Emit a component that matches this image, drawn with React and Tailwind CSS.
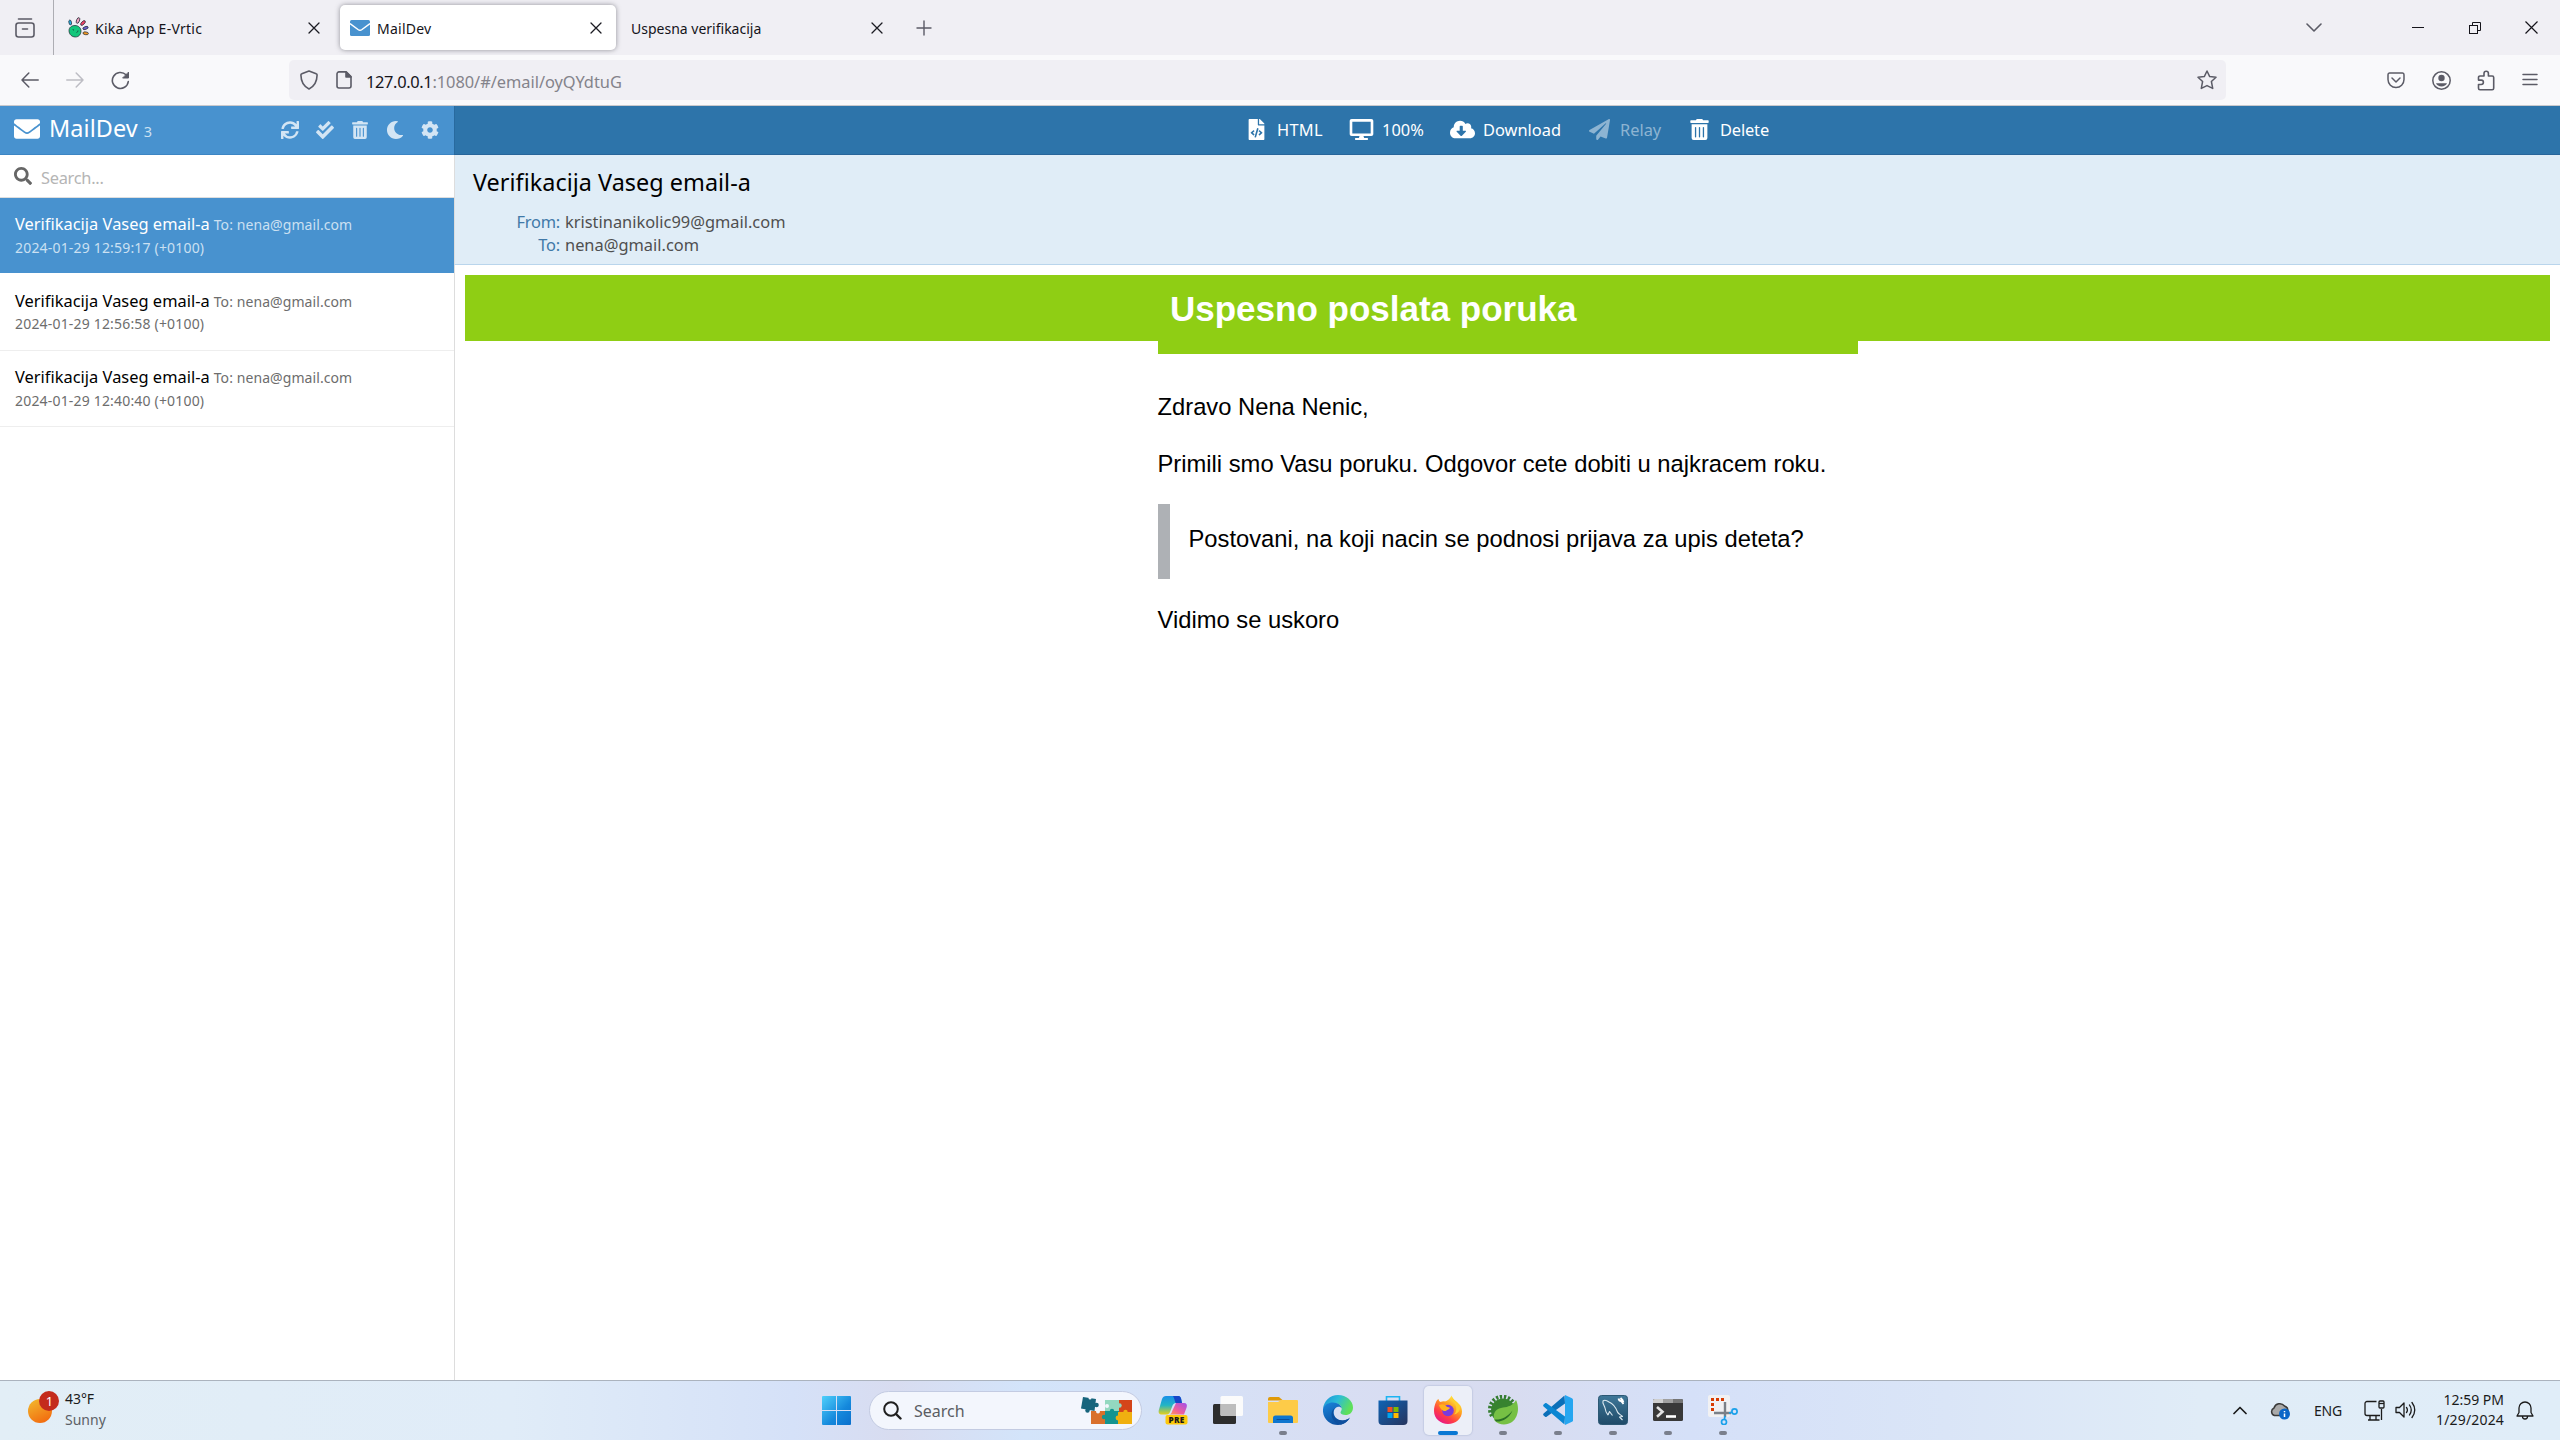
import React from "react";
import {
  FaEnvelope, FaSync, FaCheckDouble, FaTrashAlt, FaMoon, FaCog, FaSearch,
  FaFileCode, FaDesktop, FaCloudDownloadAlt, FaPaperPlane,
} from "react-icons/fa";

/* ---------- browser chrome ---------- */

const CloseX = () => (
  <svg width="12" height="12" viewBox="0 0 12 12" fill="none" stroke="#1b1b22" strokeWidth="1.3" strokeLinecap="round">
    <path d="M1 1l10 10M11 1L1 11" />
  </svg>
);

const HandIcon = () => (
  <svg width="21" height="21" viewBox="0 0 21 21" stroke="#1d2733" strokeWidth="0.7">
    <path d="M1 13.500c0-3 2.500-5 6-5s6 2.500 6 5.500-2 6-5.500 6S1 17.500 1 13.500z" fill="#12c77b" />
    <path d="M5 12l.5 1.500M8.500 15.500c1-.3 1.500-1 1.500-2" fill="none" />
    <ellipse cx="2.200" cy="5.500" rx="1.300" ry="2.500" fill="#27b3e8" transform="rotate(-12 2.200 5.500)" />
    <ellipse cx="10" cy="3.500" rx="1.500" ry="3" fill="#f4a3c0" transform="rotate(22 10 3.500)" />
    <ellipse cx="15" cy="6" rx="1.500" ry="3" fill="#ef4466" transform="rotate(45 15 6)" />
    <ellipse cx="17.500" cy="11" rx="2.800" ry="1.400" fill="#6b5fd0" transform="rotate(-20 17.500 11)" />
    <ellipse cx="17.700" cy="16.300" rx="2.800" ry="1.400" fill="#f59a23" transform="rotate(8 17.700 16.300)" />
  </svg>
);

function TabStrip() {
  return (
    <div className="flex h-[55px] items-center bg-[#f0eff4] text-[14px] text-[#15141a]">
      <div className="flex h-full w-[54px] items-center border-r border-[#adadb3] pl-[15px]">
        <svg width="20" height="20" viewBox="0 0 20 20" fill="none" stroke="#5b5b66" strokeWidth="1.600" strokeLinecap="round">
          <path d="M3.500 1h13" />
          <rect x="1" y="5" width="18" height="14" rx="2.500" />
          <path d="M7.500 11h5" />
        </svg>
      </div>
      <div className="flex h-[45px] w-[286px] items-center pl-[14px] pr-[20px]">
        <HandIcon />
        <span className="ml-[6px] flex-1 pt-[2px] tracking-[0.28px]">Kika App E-Vrtic</span>
        <CloseX />
      </div>
      <div className="flex h-[45px] w-[276px] items-center rounded-[5px] bg-white pl-[10px] pr-[14px] shadow-[0_0_5px_rgba(80,80,90,0.6)]">
        <svg width="20" height="16" viewBox="0 0 20 16">
          <rect width="20" height="16" rx="1.500" fill="#4892cf" />
          <path d="M0 3.500l8 6q2 1.400 4 0l8-6" fill="none" stroke="#fff" strokeWidth="1.500" />
        </svg>
        <span className="ml-[7px] flex-1 pt-[2px] tracking-[0.25px]">MailDev</span>
        <CloseX />
      </div>
      <div className="flex h-[45px] w-[281px] items-center pl-[15px] pr-[14px]">
        <span className="flex-1 pt-[2px]">Uspesna verifikacija</span>
        <CloseX />
      </div>
      <svg className="ml-[19px]" width="16" height="16" viewBox="0 0 16 16" fill="none" stroke="#5b5b66" strokeWidth="1.400" strokeLinecap="round">
        <path d="M8 1v14M1 8h14" />
      </svg>
      <div className="flex-1" />
      <svg className="mr-[90px]" width="16" height="10" viewBox="0 0 16 10" fill="none" stroke="#5b5b66" strokeWidth="1.600" strokeLinecap="round" strokeLinejoin="round">
        <path d="M1 1l7 7 7-7" />
      </svg>
      <div className="mr-[45px] h-px w-[12px] bg-[#15141a]" />
      <svg className="mr-[44px]" width="12" height="12" viewBox="0 0 12 12" fill="none" stroke="#15141a">
        <path d="M3.500 3V.5h8v8H9" />
        <rect x=".5" y="3.500" width="8" height="8" />
      </svg>
      <svg className="mr-[22px]" width="13" height="13" viewBox="0 0 13 13" fill="none" stroke="#15141a" strokeWidth="1.200">
        <path d="M.5.5l12 12M12.500.5l-12 12" />
      </svg>
    </div>
  );
}

function NavBar() {
  return (
    <div className="flex h-[51px] items-center border-b border-[#c9c9cd] bg-[#f9f9fb] text-[#5b5b66]">
      <svg className="ml-[21px]" width="18" height="16" viewBox="0 0 18 16" fill="none" stroke="currentColor" strokeWidth="1.500" strokeLinecap="round" strokeLinejoin="round">
        <path d="M17.200 8H1M7.800 1L1 8l6.800 7" />
      </svg>
      <svg className="ml-[27px] text-[#bdbdc4]" width="18" height="16" viewBox="0 0 18 16" fill="none" stroke="currentColor" strokeWidth="1.500" strokeLinecap="round" strokeLinejoin="round">
        <path d="M.8 8H17M10.200 1L17 8l-6.800 7" />
      </svg>
      <svg className="ml-[27px]" width="19" height="19" viewBox="0 0 19 19" fill="none" stroke="currentColor" strokeWidth="1.600" strokeLinecap="round">
        <path d="M17.300 10.500A8 8 0 1 1 15 3.800l1.500 1.700" />
        <path d="M17.500 1.500v5.500h-5.500z" fill="currentColor" strokeWidth="1" strokeLinejoin="round" />
      </svg>
      <div className="ml-[159px] flex h-[40px] w-[1937px] items-center rounded-[5px] bg-[#f0eff4] text-[16.4px]">
        <svg className="ml-[11px]" width="18" height="20" viewBox="0 0 18 20" fill="none" stroke="currentColor" strokeWidth="1.600" strokeLinejoin="round">
          <path d="M9 1l7.200 2.800c.6.200.9.6.9 1.200C17 11.500 14 16.500 9 19 4 16.500 1 11.500.9 5c0-.6.300-1 .9-1.200z" />
        </svg>
        <svg className="ml-[18px]" width="16" height="18" viewBox="0 0 16 18" fill="none" stroke="currentColor" strokeWidth="1.600" strokeLinejoin="round">
          <path d="M3 .9h7.200L15 5.500V15a2 2 0 0 1-2 2H3a2 2 0 0 1-2-2V2.900a2 2 0 0 1 2-2z" />
          <path d="M10 1v5h5z" fill="currentColor" />
        </svg>
        <div className="ml-[14px] flex-1 whitespace-nowrap pt-[4px]">
          <span className="tracking-[-0.34px] text-[#15141a]">127.0.0.1</span>
          <span className="tracking-[-0.03px] text-[#84838b]">:1080/#/email/oyQYdtuG</span>
        </div>
        <svg className="mr-[9px]" width="20" height="20" viewBox="0 0 20 20" fill="none" stroke="currentColor" strokeWidth="1.500" strokeLinejoin="round">
          <path d="M10 1l2.700 5.600 6.300.7-4.600 4.200 1.300 6.900L10 15.600l-5.700 2.800 1.300-6.900L1 7.300l6.300-.7z" />
        </svg>
      </div>
      <div className="flex-1" />
      <svg className="mr-[27px]" width="18" height="17" viewBox="0 0 18 17" fill="none" stroke="currentColor" strokeWidth="1.500" strokeLinecap="round" strokeLinejoin="round">
        <path d="M2.500 1h13A1.700 1.700 0 0 1 17 2.700v4.800a8 8 0 0 1-16 0V2.700A1.700 1.700 0 0 1 2.500 1z" />
        <path d="M5 6l4 4 4-4" />
      </svg>
      <svg className="mr-[26px]" width="19" height="19" viewBox="0 0 19 19" fill="currentColor">
        <circle cx="9.500" cy="9.500" r="8.700" fill="none" stroke="currentColor" strokeWidth="1.500" />
        <circle cx="9.500" cy="7" r="3.200" />
        <path d="M4 12.300h11c-.6 2-3 3.200-5.500 3.200S4.600 14.300 4 12.300z" />
      </svg>
      <svg className="mr-[27px]" width="18" height="21" viewBox="0 0 18 21" fill="none" stroke="currentColor" strokeWidth="1.600" strokeLinejoin="round">
        <path d="M1.500 9V7.500a1.500 1.500 0 0 1 1.500-1.500h4V3.500a2.200 2.200 0 0 1 4.400 0V6h3.800a1.500 1.500 0 0 1 1.500 1.500v10.700a1.500 1.500 0 0 1-1.500 1.500H3a1.500 1.500 0 0 1-1.500-1.500V14.500h2.700a2.200 2.200 0 0 0 0-4.400H1.500z" />
      </svg>
      <svg className="mr-[22px]" width="16" height="14" viewBox="0 0 16 14" fill="none" stroke="currentColor" strokeWidth="1.500" strokeLinecap="round">
        <path d="M1 1.500h14M1 6.500h14M1 11.500h14" />
      </svg>
    </div>
  );
}

/* ---------- MailDev ---------- */

const sideActions = [FaSync, FaCheckDouble, FaTrashAlt, FaMoon, FaCog];

const mails = [
  { time: "2024-01-29 12:59:17 (+0100)", box: "h-[75px] mb-px pt-[14px] bg-[#4892cf]", gap: "mt-[2px]", title: "text-white", meta: "text-[#cbe0f2]" },
  { time: "2024-01-29 12:56:58 (+0100)", box: "h-[77px] pt-[15px] border-b border-[#eeeeee]", gap: "mt-px", title: "text-black", meta: "text-[#6d6d6d]" },
  { time: "2024-01-29 12:40:40 (+0100)", box: "h-[76px] pt-[14px] border-b border-[#eeeeee]", gap: "mt-[2px]", title: "text-black", meta: "text-[#6d6d6d]" },
];

function Sidebar() {
  return (
    <div className="flex w-[454px] flex-col bg-white">
      <div className="flex h-[49px] items-center border-b border-[#3c85c3] bg-[#4892cf] pl-[14px] pr-[7px] text-white">
        <FaEnvelope className="mb-[2px] size-[26px]" />
        <div className="mb-[3px] ml-[9px] flex flex-1 items-baseline">
          <span className="text-[23.4px] tracking-[0.1px]">MailDev</span>
          <span className="ml-[6px] text-[14.5px] text-[#cbe0f2]">3</span>
        </div>
        <div className="flex text-[#d3e5f4]">
          {sideActions.map((Icon, i) => (
            <span key={i} className="flex w-[35px] justify-center">
              <Icon className="size-[18px]" />
            </span>
          ))}
        </div>
      </div>
      <div className="flex h-[43px] items-center border-b border-[#dedede] pl-[14px]">
        <FaSearch className="size-[18px] text-[#666666]" />
        <span className="ml-[9px] pt-[4px] text-[16.4px] tracking-[-0.28px] text-[#b5b5b5]">Search...</span>
      </div>
      {mails.map((m) => (
        <div key={m.time} className={"pl-[15px] " + m.box}>
          <div className="flex h-[24px] items-baseline leading-[24px]">
            <span className={"text-[16.4px] tracking-[0.02px] " + m.title}>Verifikacija Vaseg email-a</span>
            <span className={"ml-[4px] text-[14px] tracking-[0.08px] " + m.meta}>To: nena@gmail.com</span>
          </div>
          <div className={"text-[14px] leading-[20px] tracking-[0.18px] " + m.gap + " " + m.meta}>{m.time}</div>
        </div>
      ))}
    </div>
  );
}

const actions = [
  { Icon: FaFileCode, label: "HTML", w: "w-[47px] tracking-[0.3px]", c: "text-white" },
  { Icon: FaDesktop, label: "100%", w: "w-[43px] tracking-[0.05px]", c: "text-white", wide: true },
  { Icon: FaCloudDownloadAlt, label: "Download", w: "w-[79px]", c: "text-white", wide: true },
  { Icon: FaPaperPlane, label: "Relay", w: "w-[42px]", c: "text-[#8db4d2]" },
  { Icon: FaTrashAlt, label: "Delete", w: "w-[50px] tracking-[-0.14px]", c: "text-white" },
];

function MailView() {
  return (
    <div className="flex flex-1 flex-col border-l border-[#dddddd] bg-white">
      <div className="-ml-px flex h-[49px] items-center gap-[25px] border-b border-l border-[#27659a] border-l-[#286a9f] bg-[#2d74aa] pl-[789px] text-[16.4px]">
        {actions.map(({ Icon, label, w, c, wide }) => (
          <div key={label} className={"flex items-center " + c}>
            <span className="flex w-[25px] justify-center">
              <Icon className={wide ? "h-[21px] w-[25px]" : "size-[21px]"} />
            </span>
            <span className={"ml-[8px] " + w}>{label}</span>
          </div>
        ))}
      </div>
      <div className="-ml-px h-[110px] border-b border-l border-[#b9d5ec] border-l-[#dddddd] bg-[#e0edf7] pl-[18px] pt-[10px]">
        <div className="h-[34px] text-[23.4px] leading-[34px] tracking-[0.03px] text-black">Verifikacija Vaseg email-a</div>
        <div className="mt-[11px] grid grid-cols-[87px_auto] gap-x-[5px] text-[16.4px] leading-[23px] text-[#4f4f4f]">
          <span className="text-right tracking-[-0.2px] text-[#4079a8]">From:</span>
          <span>kristinanikolic99@gmail.com</span>
          <span className="text-right tracking-[-0.2px] text-[#4079a8]">To:</span>
          <span>nena@gmail.com</span>
        </div>
      </div>
      <div className="p-[10px] font-['Liberation_Sans',Arial,sans-serif] text-[23.75px] leading-[30px] text-black">
        <div className="mx-auto h-[66px] bg-[#8fce14]">
          <div className="mx-auto h-[79px] w-[700px] bg-[#8fce14] pl-[12.5px] pt-[14px]">
            <h1 className="text-[35px] font-bold leading-[40px] text-white">Uspesno poslata poruka</h1>
          </div>
        </div>
        <div className="mx-auto mt-[51px] w-[700px]">
          <p>Zdravo Nena Nenic,</p>
          <p className="mt-[27px]">Primili smo Vasu poruku. Odgovor cete dobiti u najkracem roku.</p>
          <div className="mt-[25px] h-[75px] border-l-[12px] border-[#aeb1b5] pl-[19px] pt-[20px]">
            Postovani, na koji nacin se podnosi prijava za upis deteta?
          </div>
          <p className="mt-[26px]">Vidimo se uskoro</p>
        </div>
      </div>
    </div>
  );
}

/* ---------- taskbar ---------- */

const Puzzle = () => (
  <svg width="53" height="29" viewBox="0 0 53 29">
    <path d="M11 15h14v13H11z" fill="#d9702c" />
    <path d="M25 4h14v11H25z" fill="#93d8c0" />
    <path d="M39 4h13v12H39z" fill="#d4451a" />
    <path d="M25 15h14v13H25z" fill="#149490" />
    <path d="M38 16h14v12H38z" fill="#f0b010" />
    <circle cx="18" cy="15.500" r="2" fill="#f3f6fd" />
    <circle cx="27" cy="10" r="2" fill="#f3f6fd" />
    <circle cx="24" cy="21" r="2.200" fill="#149490" />
    <circle cx="39.500" cy="9.500" r="2.200" fill="#93d8c0" />
    <circle cx="32" cy="15" r="2.200" fill="#149490" />
    <circle cx="38" cy="22" r="2.400" fill="#f0b010" />
    <circle cx="45.500" cy="16" r="2.200" fill="#f0b010" />
    <path d="M3 1l13 2-1.500 12L1 12.500z" fill="#17647c" />
    <circle cx="16.500" cy="9" r="2.300" fill="#17647c" />
    <circle cx="7.500" cy="14.500" r="2.200" fill="#17647c" />
    <circle cx="10" cy="2" r="1.500" fill="#f3f6fd" />
  </svg>
);

const Copilot = () => (
  <svg width="30" height="30" viewBox="0 0 30 30">
    <defs>
      <linearGradient id="cpA" x1="0" y1="0" x2="0" y2="1">
        <stop offset="0" stopColor="#1a8fe8" /><stop offset=".5" stopColor="#22b5c4" /><stop offset="1" stopColor="#e8d01a" />
      </linearGradient>
      <linearGradient id="cpB" x1="1" y1="0" x2="0" y2="1">
        <stop offset="0" stopColor="#a050ec" /><stop offset=".6" stopColor="#f0609a" /><stop offset="1" stopColor="#ffa050" />
      </linearGradient>
    </defs>
    <path d="M8 1h12c3 0 3 2 4 7h-6c-2 0-3 1-4 4l-2 5c-.8 2-2 2.500-4 2.500H4c-3 0-4-2-3-5L4 4c.8-2 2-3 4-3z" fill="url(#cpA)" />
    <path d="M15 1h5c3 0 3 2 4 7h-6c-1 0-1.500-5-3-7z" fill="#1646c8" />
    <path d="M18 8h8c2.500 0 3.500 2 2.600 4.500L26 19.500H11c2 0 2.500-1.500 3.200-3.500z" fill="url(#cpB)" />
    <rect x="7.500" y="20" width="22" height="9.500" rx="2" fill="#fdc90a" />
    <text x="18.500" y="27.800" textAnchor="middle" fontSize="8.200" fontWeight="800" letterSpacing=".3" fill="#1a1a1a" fontFamily="Open Sans, sans-serif">PRE</text>
  </svg>
);

const TaskView = () => (
  <svg width="30" height="30" viewBox="0 0 30 30">
    <rect x="0" y="9" width="23" height="20" rx="1.500" fill="#2d2d2d" />
    <rect x="7.500" y="1" width="22.500" height="20" rx="1.500" fill="#fbfbfb" />
    <path d="M7.500 9H23v12H9a1.500 1.500 0 0 1-1.500-1.500z" fill="#bdbdbd" />
  </svg>
);

const Explorer = () => (
  <svg width="30" height="30" viewBox="0 0 30 30">
    <path d="M0 4a2 2 0 0 1 2-2h9l4 3.500H0z" fill="#e09a08" />
    <path d="M0 7h10l3-2h16a1 1 0 0 1 1 1v21a1 1 0 0 1-1 1H1a1 1 0 0 1-1-1z" fill="#fdcb48" />
    <path d="M5 28v-5a2.500 2.500 0 0 1 2.500-2.500h15A2.500 2.500 0 0 1 25 23v5z" fill="#0f76cf" />
    <path d="M9 24.500h12" stroke="#0a4f9c" strokeWidth="1.200" strokeLinecap="round" />
  </svg>
);

const Edge = () => (
  <svg width="30" height="30" viewBox="0 0 30 30">
    <defs>
      <linearGradient id="edA" x1="0" y1="0" x2="1" y2=".4">
        <stop offset="0" stopColor="#1a8fd8" /><stop offset=".5" stopColor="#2cbcd8" /><stop offset="1" stopColor="#5fe05a" />
      </linearGradient>
      <linearGradient id="edB" x1="0" y1="0" x2=".6" y2="1">
        <stop offset="0" stopColor="#1a86dc" /><stop offset="1" stopColor="#0c4c9c" />
      </linearGradient>
    </defs>
    <path d="M0 14C.8 6 7 0 15 0c8.500 0 15 6 15 12.500 0 5-3.500 7.500-7.500 7.500-3 0-5-1-5-2.500 0-1 1.200-1.500 1.200-3.700C18.700 10.500 15 8 11 8 5 8 1 11 0 14z" fill="url(#edA)" />
    <path d="M0 14c1-4 5-6.500 10-6.500 4.500 0 8.500 2.800 8.700 6C18 12 16.500 11.500 15 11.800c-3.500.7-5 4.200-4 7.700 1.200 4.500 6.500 7 11.500 5.500 2-.6 3.500-1.500 4.500-2.500C24.500 27 20 30 15 30 7 30-.8 23.500 0 14z" fill="url(#edB)" />
    <path d="M13 12.500c-3 1.500-3.500 5-2 8.500 2 4 7 5.500 11.500 4 2-.6 3.500-1.500 4.500-2.500-2 3.800-5 6-9 7-5-.5-9.500-5-9.500-10 0-3.500 1.800-6 4.500-7z" fill="#0d4f9e" />
  </svg>
);

const Store = () => (
  <svg width="30" height="30" viewBox="0 0 30 30">
    <defs>
      <linearGradient id="stA" x1="0" y1="0" x2="1" y2="1">
        <stop offset="0" stopColor="#0f63b4" /><stop offset="1" stopColor="#26345e" />
      </linearGradient>
    </defs>
    <path d="M8.500 6V1.700h13V6" fill="none" stroke="#1db4f2" strokeWidth="1.600" />
    <path d="M.5 5.500h29V26a4 4 0 0 1-4 4h-21a4 4 0 0 1-4-4z" fill="url(#stA)" />
    <rect x="9.500" y="12" width="5" height="5" fill="#f25022" />
    <rect x="15.500" y="12" width="5" height="5" fill="#7fba00" />
    <rect x="9.500" y="18" width="5" height="5" fill="#00a4ef" />
    <rect x="15.500" y="18" width="5" height="5" fill="#ffb900" />
  </svg>
);

const Firefox = () => (
  <svg width="30" height="30" viewBox="0 0 30 30">
    <defs>
      <linearGradient id="ffA" x1=".85" y1=".1" x2=".25" y2="1">
        <stop offset="0" stopColor="#fff04a" /><stop offset=".35" stopColor="#ffa01e" /><stop offset=".7" stopColor="#ff3c46" /><stop offset="1" stopColor="#e6148c" />
      </linearGradient>
    </defs>
    <path d="M3 7c.5-1.500 1.500-2.500 2.500-3 .2 1.500 1 2.500 2 3 1.500-.6 3-.8 4.500-.5C14.500 6 17 3.500 18.500.5c1 3.500 4.500 5.500 6.500 8 2.500 1 4 4.500 4 8C29 23.500 22.500 29 15 29S1 23.500 1 16c0-3.500.8-6.500 2-9z" fill="url(#ffA)" />
    <circle cx="15" cy="15.500" r="5.800" fill="#7a3bdc" />
    <path d="M6 10c3-1.500 6-.5 7.500 1.500 1 1.200 3 .5 3.500 1.500-1 2-3.500 1.500-4 3-3 .5-6-2-7-6z" fill="#ffb21e" />
    <path d="M19 2c-1 4 2 5 3.500 8 1.500 3 1 7-1.500 9.500 4-1 6.500-4 6-8C26 7 21 6 19 2z" fill="#ffcf2e" />
  </svg>
);

const Spring = () => (
  <svg width="30" height="30" viewBox="0 0 30 30">
    <path d="M27 14.500A12.500 12.500 0 1 0 4 21" fill="none" stroke="#357d31" strokeWidth="4" strokeDasharray="2.300 1.700" />
    <circle cx="15" cy="15.500" r="12" fill="#37832f" />
    <path d="M28 5c3.500 7 2.500 17-4 22-5 3.500-13 3.500-17.500-1.500C4 18 8 13.500 15 12.500 20 12 25 10.500 28 5z" fill="#76c044" />
    <path d="M6.500 24.500c7 .5 13.500-3 18-9-3.500 8-10 11.500-16.500 11z" fill="#2b7127" />
  </svg>
);

const VSCode = () => (
  <svg width="30" height="30" viewBox="0 0 30 30">
    <path d="M21.500.5L.6 18.500c-.6.600-.6 1.400 0 2l1.500 1.300c.5.400 1 .4 1.500 0L22 8.500z" fill="#0b6fb8" />
    <path d="M21.500 29.500L.6 11.500c-.6-.6-.6-1.400 0-2l1.500-1.300c.5-.4 1-.4 1.500 0L22 21.500z" fill="#0a86d2" />
    <path d="M22 0l7 3.200c.6.300 1 .9 1 1.600v20.400c0 .7-.4 1.300-1 1.600L22 30z" fill="#26a6f0" />
  </svg>
);

const MySQL = () => (
  <svg width="30" height="30" viewBox="0 0 30 30">
    <defs>
      <linearGradient id="msA" x1="0" y1="0" x2="0" y2="1">
        <stop offset="0" stopColor="#3f7899" /><stop offset="1" stopColor="#1f4a68" />
      </linearGradient>
    </defs>
    <rect x=".5" y=".5" width="29" height="29" rx="3" fill="url(#msA)" stroke="#2c5874" />
    <path d="M10 20c-2-2-2.500-4-3-7-.4-2-3-5-2-7 1.500-1.500 4-.5 6 1 5 2 7 6 8.500 10 .8 2 3 2.500 5 4.500l-3 .5 3 3M10 20l1.500-3.500 3 4" fill="none" stroke="#dce9f0" strokeWidth="1.100" strokeLinejoin="round" />
    <path d="M20.500 3.500c.5 2 1.500 2.500 2.500 2.500l2.500 3M22.500 3l2 2 1 2.500" fill="none" stroke="#fff" strokeWidth="1.800" />
  </svg>
);

const Terminal = () => (
  <svg width="30" height="30" viewBox="0 0 30 30">
    <rect y="4" width="30" height="22" rx="1.500" fill="#383838" />
    <path d="M1.500 4H10v4H0V5.500A1.500 1.500 0 0 1 1.500 4z" fill="#cfcfcf" />
    <path d="M10 4h10v4H10z" fill="#a0a0a0" />
    <path d="M20 4h8.500A1.500 1.500 0 0 1 30 5.500V8H20z" fill="#757575" />
    <path d="M4 12l5.500 4.800L4 21.700" fill="none" stroke="#e2e2e2" strokeWidth="2.600" />
    <path d="M13 21.500h10" stroke="#fff" strokeWidth="2.600" />
  </svg>
);

const Snip = () => (
  <svg width="30" height="30" viewBox="0 0 30 30">
    <rect x="0" y="0" width="22" height="22" rx="2" fill="#f1f1f3" />
    <path d="M3 4.500h13M4.500 3v13" fill="none" stroke="#d83b01" strokeWidth="3" strokeDasharray="3 2" />
    <path d="M17 7v15M6 18h17" stroke="#7b8087" strokeWidth="2.400" />
    <circle cx="26.500" cy="16.500" r="2.600" fill="none" stroke="#1ba1ea" strokeWidth="1.700" />
    <circle cx="16" cy="27" r="2.500" fill="none" stroke="#1ba1ea" strokeWidth="1.700" />
    <path d="M21 18l3-.8M17 21l-.6 3.500" stroke="#1ba1ea" strokeWidth="1.700" />
  </svg>
);

const apps = [
  { Icon: Copilot }, { Icon: TaskView }, { Icon: Explorer, open: true }, { Icon: Edge }, { Icon: Store },
  { Icon: Firefox, active: true }, { Icon: Spring, open: true }, { Icon: VSCode, open: true },
  { Icon: MySQL, open: true }, { Icon: Terminal, open: true }, { Icon: Snip, open: true },
];

function Taskbar() {
  return (
    <div className="flex h-[60px] items-center border-t border-[#abb3be] bg-[linear-gradient(90deg,#e2eef6_0%,#e0ecf8_20%,#d5e1f8_31%,#d8dcf0_35%,#d3e4fa_40%,#d8def3_52%,#d8dcf0_59%,#d5e0f8_66%,#dae5f7_76%,#e0ecf7_86%,#e0edf8_100%)] pb-px text-[14px] text-[#1b1b1b]">
      <div className="mb-[3px] flex w-[822px] items-center pl-[26px]">
        <svg width="34" height="36" viewBox="0 0 34 36">
          <defs>
            <linearGradient id="sun" x1=".2" y1="0" x2=".7" y2="1">
              <stop offset="0" stopColor="#f2b62c" /><stop offset="1" stopColor="#f26a0f" />
            </linearGradient>
          </defs>
          <circle cx="14" cy="20" r="12" fill="url(#sun)" />
          <circle cx="23" cy="10" r="10" fill="#c42b1c" />
          <text x="23.500" y="14.800" textAnchor="middle" fontSize="13" fill="#fff" fontFamily="Noto Sans, sans-serif">1</text>
        </svg>
        <div className="ml-[5px] leading-[21px]">
          <div className="tracking-[-0.07px]">43°F</div>
          <div className="text-[#5c6166]">Sunny</div>
        </div>
      </div>
      <svg width="29" height="29" viewBox="0 0 29 29">
        <defs>
          <linearGradient id="win" x1="0" y1="0" x2="1" y2="1">
            <stop offset="0" stopColor="#4fd0fb" /><stop offset=".6" stopColor="#1488dc" /><stop offset="1" stopColor="#0a6fcc" />
          </linearGradient>
        </defs>
        <path d="M1 0h13v14H0V1a1 1 0 0 1 1-1zM15 0h13a1 1 0 0 1 1 1v13H15zM0 15h14v14H1a1 1 0 0 1-1-1zM15 15h14v13a1 1 0 0 1-1 1H15z" fill="url(#win)" />
      </svg>
      <div className="ml-[18px] flex h-[39px] w-[273px] items-center rounded-full border border-[#c3cbe2] bg-[#f3f6fd] pl-[13px] pr-[8px] text-[16px] text-[#5b5d63]">
        <svg width="19" height="19" viewBox="0 0 19 19" fill="none" stroke="#1f1f1f" strokeWidth="2" strokeLinecap="round">
          <circle cx="8" cy="8" r="6.800" />
          <path d="M13 13l4.500 4.500" strokeWidth="2.400" />
        </svg>
        <span className="ml-[12px] flex-1 pt-px">Search</span>
        <Puzzle />
      </div>
      <div className="ml-[3px] flex">
        {apps.map(({ Icon, open, active }, i) => (
          <div key={i} className="flex w-[55px] justify-center">
            <div className={"relative flex h-[49px] w-[48px] items-center justify-center rounded-[5px] " + (active ? "bg-[#eceff8] shadow-[0_0_1px_1px_rgba(180,190,215,0.5)]" : "")}>
              <Icon />
              {open && <span className="absolute bottom-0 left-[20px] h-[4px] w-[8px] rounded-full bg-[#7a7f8c]" />}
              {active && <span className="absolute bottom-0 left-[14px] h-[4px] w-[20px] rounded-full bg-[#0a78d4]" />}
            </div>
          </div>
        ))}
      </div>
      <div className="flex-1" />
      <svg className="mr-[23px]" width="14" height="9" viewBox="0 0 14 9" fill="none" stroke="#1b1b1b" strokeWidth="1.700" strokeLinecap="round" strokeLinejoin="round">
        <path d="M1 7.500l6-6 6 6" />
      </svg>
      <svg className="mr-[24px]" width="20" height="19" viewBox="0 0 20 19">
        <path d="M4.500 14.500a4 4 0 0 1-.5-7.500A6 6 0 0 1 14.500 5a5 5 0 0 1 3.500 4.500c0 3-2 5-4.500 5z" fill="#a9a9a9" stroke="#3a3a3a" strokeWidth="1.500" />
        <circle cx="14.500" cy="13" r="5.500" fill="#0a66c8" />
        <path d="M14.500 12.500v3.500M14.500 10v1.200" stroke="#fff" strokeWidth="1.500" />
      </svg>
      <span className="mr-[22px] tracking-[-0.2px]">ENG</span>
      <svg className="mr-[10px]" width="21" height="21" viewBox="0 0 21 21" fill="none" stroke="#1b1b1b" strokeWidth="1.300">
        <path d="M12.500 1.500H3A2 2 0 0 0 1 3.500v10a2 2 0 0 0 2 2h13M6 16v4M12 16v4M4 20h11.500M17.500 9v11" />
        <rect x="15" y="1" width="5" height="7" rx="1" />
        <path d="M15 3.500h5" />
      </svg>
      <svg className="mr-[19px]" width="21" height="18" viewBox="0 0 21 18" fill="none" stroke="#1b1b1b" strokeWidth="1.300" strokeLinecap="round" strokeLinejoin="round">
        <path d="M1 6.500v5h3.500L9 16V2L4.500 6.500zM11.500 6.500q1.800 2.500 0 5M14.500 4q3.500 5 0 10M17 1.500q5.500 7.500 0 15" />
      </svg>
      <div className="mb-px mr-[12px] w-[69px] whitespace-nowrap text-right leading-[20px]">
        <div>12:59 PM</div>
        <div className="tracking-[0.17px]">1/29/2024</div>
      </div>
      <svg className="mr-[26px]" width="18" height="19" viewBox="0 0 18 19" fill="none" stroke="#1b1b1b" strokeWidth="1.300" strokeLinejoin="round" strokeLinecap="round">
        <path d="M9 1a6 6 0 0 1 6 6v4.500l2 3.500H1l2-3.500V7a6 6 0 0 1 6-6zM6.500 15.500a2.500 2.500 0 0 0 5 0" />
      </svg>
    </div>
  );
}

export default function App() {
  return (
    <div className="flex h-[1440px] w-[2560px] flex-col overflow-hidden bg-white font-['Noto_Sans','Open_Sans',sans-serif]">
      <TabStrip />
      <NavBar />
      <div className="flex min-h-0 flex-1">
        <Sidebar />
        <MailView />
      </div>
      <Taskbar />
    </div>
  );
}
